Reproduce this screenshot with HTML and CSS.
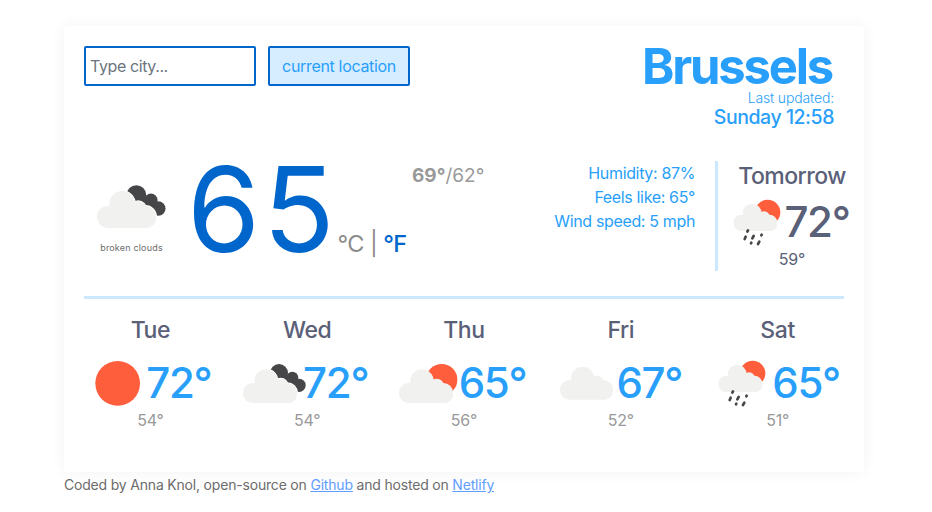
FILE: index.html
```html
<!DOCTYPE html>
<html lang="en">
<head>
<meta charset="utf-8">
<title>Weather</title>
<link rel="stylesheet" href="styles.css">
</head>
<body>
<svg class="defs" aria-hidden="true">
  <defs>
    <g id="cloud">
      <rect x="0" y="41" width="162" height="60" rx="29"/>
      <circle cx="69" cy="35" r="35"/>
      <circle cx="113" cy="50" r="22"/>
      <circle cx="136" cy="75" r="26"/>
    </g>
    <symbol id="clear" viewBox="0 0 192 192"><circle class="sun" cx="95" cy="97" r="67"/></symbol>
    <symbol id="broken" viewBox="0 0 192 192">
      <g class="dark"><circle cx="108" cy="66" r="27"/><circle cx="148" cy="80" r="18"/><circle cx="168" cy="103" r="20"/><path d="M108 65L148 81L170 104L158 121L105 90Z"/></g>
      <use href="#cloud" class="gap" y="55"/><use href="#cloud" class="cloud" y="55"/>
    </symbol>
    <symbol id="partly" viewBox="0 0 192 192">
      <circle class="sun" cx="128" cy="86" r="47"/>
      <use href="#cloud" class="cloud" y="55"/>
    </symbol>
    <symbol id="cloudy" viewBox="0 0 192 192"><use href="#cloud" class="cloud" transform="translate(12 47) scale(.98)"/></symbol>
    <symbol id="rain" viewBox="0 0 192 192">
      <circle class="sun" cx="122" cy="67" r="38"/>
      <g transform="translate(19.5 41) scale(.81)"><use href="#cloud" class="cloud"/></g>
      <path class="drops" d="M63 121L61 125M56 140L53 147M80 138L76 145M104 134L103 136M73 158L72 160M97 155L93 162"/>
    </symbol>
  </defs>
</svg>
<main class="card">
  <header class="top">
    <form class="search">
      <input class="city-input" type="text" placeholder="Type city...">
      <button class="locate" type="button">current location</button>
    </form>
    <div class="place">
      <h1 class="city">Brussels</h1>
      <div class="updated">Last updated:</div>
      <div class="time">Sunday 12:58</div>
    </div>
  </header>
  <section class="now">
    <div class="condition">
      <svg class="icon-large"><use href="#broken"/></svg>
      <div class="caption">broken clouds</div>
    </div>
    <div class="current"><span class="degrees">65</span><span class="units">°C | <b>°F</b></span></div>
    <div class="range"><strong>69°</strong>/62°</div>
    <div class="details"><div>Humidity: 87%</div><div>Feels like: 65°</div><div>Wind speed: 5 mph</div></div>
    <div class="tomorrow">
      <div class="day">Tomorrow</div>
      <div class="reading"><svg class="icon"><use href="#rain"/></svg><span class="high">72°</span></div>
      <div class="low">59°</div>
    </div>
  </section>
  <section class="forecast">
    <div><div class="day">Tue</div><div class="reading"><svg class="icon"><use href="#clear"/></svg><span class="high">72°</span></div><div class="low">54°</div></div>
    <div><div class="day">Wed</div><div class="reading"><svg class="icon"><use href="#broken"/></svg><span class="high">72°</span></div><div class="low">54°</div></div>
    <div><div class="day">Thu</div><div class="reading"><svg class="icon"><use href="#partly"/></svg><span class="high">65°</span></div><div class="low">56°</div></div>
    <div><div class="day">Fri</div><div class="reading"><svg class="icon"><use href="#cloudy"/></svg><span class="high">67°</span></div><div class="low">52°</div></div>
    <div><div class="day">Sat</div><div class="reading"><svg class="icon"><use href="#rain"/></svg><span class="high">65°</span></div><div class="low">51°</div></div>
  </section>
</main>
<footer class="credit">Coded by Anna Knol, open-source on <a href="#">Github</a> and hosted on <a href="#">Netlify</a></footer>
</body>
</html>
```
FILE: styles.css
```css
* { box-sizing: border-box; }
body { margin: 0; background: #fff; font: 16px/24px Inter, "Liberation Sans", sans-serif; color: #5a6078; }
.defs { display: block; width: 0; height: 0; }
.sun { fill: #ff5e3c; }
.cloud { fill: #f1f1f0; }
.gap { fill: #fff; stroke: #fff; stroke-width: 5; }
.dark { fill: #464648; }
.drops { fill: none; stroke: #464648; stroke-width: 8; stroke-linecap: round; }

.card { width: 800px; height: 446px; margin: 26px 0 0 64px; padding: 20px; background: #fff; box-shadow: 0 0 15px rgba(0, 0, 0, .05); }
.top { display: flex; justify-content: space-between; height: 115px; }
.search { display: flex; gap: 12px; height: 40px; }
.city-input { width: 172px; padding: 0 4px; border: 2px solid #0066cc; border-radius: 2px; font: inherit; letter-spacing: -.4px; background: #fff; }
.city-input::placeholder { color: #6c757d; opacity: 1; }
.locate { width: 142px; padding: 0; border: 2px solid #0066cc; border-radius: 2px; background: #d6ecff; color: #289ffa; font: inherit; letter-spacing: -.33px; }
.place { padding-right: 10px; text-align: right; color: #289ffa; }
.city { margin: 1px 2px 0 0; font-size: 49px; line-height: 40px; font-weight: 700; letter-spacing: -2.2px; }
.updated { margin-top: 2px; font-size: 14px; line-height: 17px; font-weight: 300; letter-spacing: -.15px; }
.time { margin-top: 1px; font-size: 19.5px; line-height: 20px; font-weight: 500; letter-spacing: -.45px; }

.now { display: flex; height: 138px; border-bottom: 3px solid #cce8ff; }
.condition { width: 96px; padding-top: 10px; text-align: center; }
.icon-large { display: block; width: 70px; height: 70px; margin: 0 auto; }
.caption { margin: 1px 1px 0 0; font-size: 9px; line-height: 12px; letter-spacing: .18px; color: #6c6c6c; }
.current { width: 232px; padding-left: 7px; line-height: 97px; color: #0066cc; white-space: nowrap; }
.degrees { font-size: 118px; letter-spacing: 2.8px; }
.units { font-size: 23.5px; letter-spacing: -.6px; color: #8c8c8c; }
.units b { font-weight: 500; color: #0066cc; }
.range { padding-top: 3px; font-size: 19px; color: #999; }
.details { margin-left: auto; padding-right: 20px; text-align: right; color: #289ffa; letter-spacing: -.35px; }
.tomorrow { width: 149px; height: 110px; margin-right: -20px; border-left: 3px solid #cce8ff; padding-right: 1px; text-align: center; }
.tomorrow .reading { height: 60px; margin: 1px 1px 0 0; }
.tomorrow .icon { margin-right: -7px; }
.tomorrow .day { line-height: 30px; margin-right: -3px; letter-spacing: -.5px; }
.tomorrow .low { margin-top: -3px; margin-right: -3px; }
.day { font-size: 23px; line-height: 29px; font-weight: 500; letter-spacing: -.4px; }
.reading { display: flex; justify-content: center; align-items: center; height: 64px; }
.icon { flex: none; width: 64px; height: 64px; margin: 0 -4px 0 -3px; }
.high { font-size: 42px; font-weight: 500; letter-spacing: -1.3px; }
.low { font-size: 16px; line-height: 20px; letter-spacing: -.2px; }
.forecast { display: grid; grid-template-columns: repeat(5, 1fr); margin: 17px -12px 0; text-align: center; }
.forecast .reading { margin: 6px 0 -5px; }
.forecast .high { color: #289ffa; }
.forecast .low { color: #999; }
.credit { margin-left: 64px; padding-top: 3px; font-size: 14px; line-height: 20px; letter-spacing: -.19px; color: #6c6c6c; }
.credit a { color: #5f9dff; }
```
